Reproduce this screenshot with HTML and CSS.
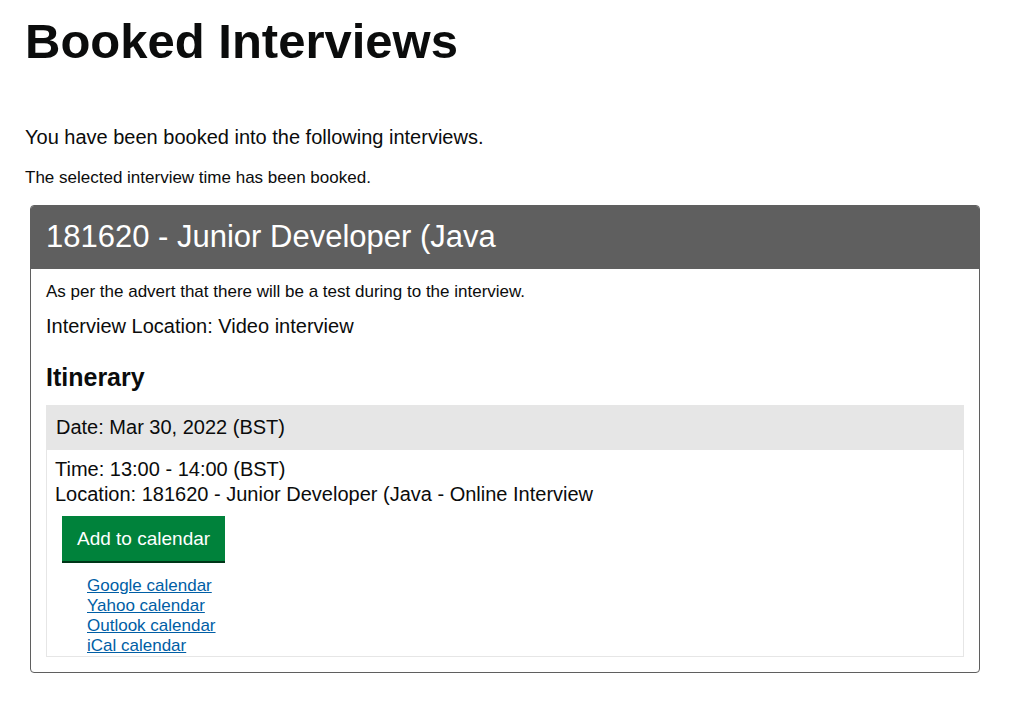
FILE: index.html
```html
<!DOCTYPE html>
<html lang="en">
<head>
<meta charset="utf-8">
<title>Booked Interviews</title>
<link rel="stylesheet" href="styles.css">
</head>
<body>
<main class="page">
  <h1 class="page-title">Booked Interviews</h1>
  <p class="intro">You have been booked into the following interviews.</p>
  <p class="notice">The selected interview time has been booked.</p>

  <section class="panel">
    <h2 class="panel-title">181620 - Junior Developer (Java</h2>
    <div class="panel-body">
      <p class="advert">As per the advert that there will be a test during to the interview.</p>
      <p class="location">Interview Location: Video interview</p>
      <h3 class="itinerary-title">Itinerary</h3>
      <div class="itinerary">
        <div class="itinerary-date">Date: Mar 30, 2022 (BST)</div>
        <div class="itinerary-body">
          <div class="slot">Time: 13:00 - 14:00 (BST)</div>
          <div class="slot">Location: 181620 - Junior Developer (Java - Online Interview</div>
          <button class="btn-calendar" type="button">Add to calendar</button>
          <ul class="calendar-links">
            <li><a href="#">Google calendar</a></li>
            <li><a href="#">Yahoo calendar</a></li>
            <li><a href="#">Outlook calendar</a></li>
            <li><a href="#">iCal calendar</a></li>
          </ul>
        </div>
      </div>
    </div>
  </section>
</main>
</body>
</html>
```

FILE: styles.css
```css
html, body {
  margin: 0;
  padding: 0;
  background: #ffffff;
}

body {
  font-family: "Liberation Sans", Arial, sans-serif;
  color: #0b0c0c;
}

.page {
  padding: 13px 0 0 25px;
  width: 955px;
}

.page-title {
  margin: 0;
  font-size: 49px;
  line-height: 56px;
  font-weight: 700;
}

.intro {
  margin: 56px 0 0;
  font-size: 20px;
  line-height: 24px;
}

.notice {
  margin: 19px 0 0;
  font-size: 17px;
  line-height: 20px;
}

.panel {
  margin: 17px 0 0 5px;
  border: 1px solid #5f5f5f;
  border-radius: 4px;
  overflow: hidden;
  width: 948px;
}

.panel-title {
  margin: 0;
  background: #5f5f5f;
  color: #ffffff;
  font-weight: 400;
  font-size: 31px;
  line-height: 36px;
  padding: 13px 15px 14px;
}

.panel-body {
  padding: 13px 15px 15px 15px;
}

.advert {
  margin: 0;
  font-size: 17px;
  line-height: 20px;
}

.location {
  margin: 12px 0 0;
  font-size: 20px;
  line-height: 24px;
}

.itinerary-title {
  margin: 24px 0 0;
  font-size: 25px;
  line-height: 30px;
  font-weight: 700;
}

.itinerary {
  margin-top: 13px;
  border: 1px solid #e6e6e6;
}

.itinerary-date {
  background: #e6e6e6;
  font-size: 20px;
  line-height: 24px;
  padding: 9px 9px 11px;
}

.itinerary-body {
  padding: 7px 8px 0;
}

.slot {
  font-size: 20px;
  line-height: 25px;
}

.btn-calendar {
  display: block;
  margin: 9px 0 0 7px;
  padding: 0 15px;
  height: 45px;
  border: 0;
  border-radius: 0;
  background: #00823b;
  box-shadow: 0 2px 0 #003618;
  color: #ffffff;
  font-family: "Liberation Sans", Arial, sans-serif;
  font-size: 19px;
  line-height: 1;
  cursor: pointer;
}

.calendar-links {
  list-style: none;
  margin: 15px 0 0;
  padding: 0 0 0 32px;
}

.calendar-links li {
  font-size: 17px;
  line-height: 20px;
}

.calendar-links a {
  color: #005ea5;
  text-decoration: underline;
}
```
